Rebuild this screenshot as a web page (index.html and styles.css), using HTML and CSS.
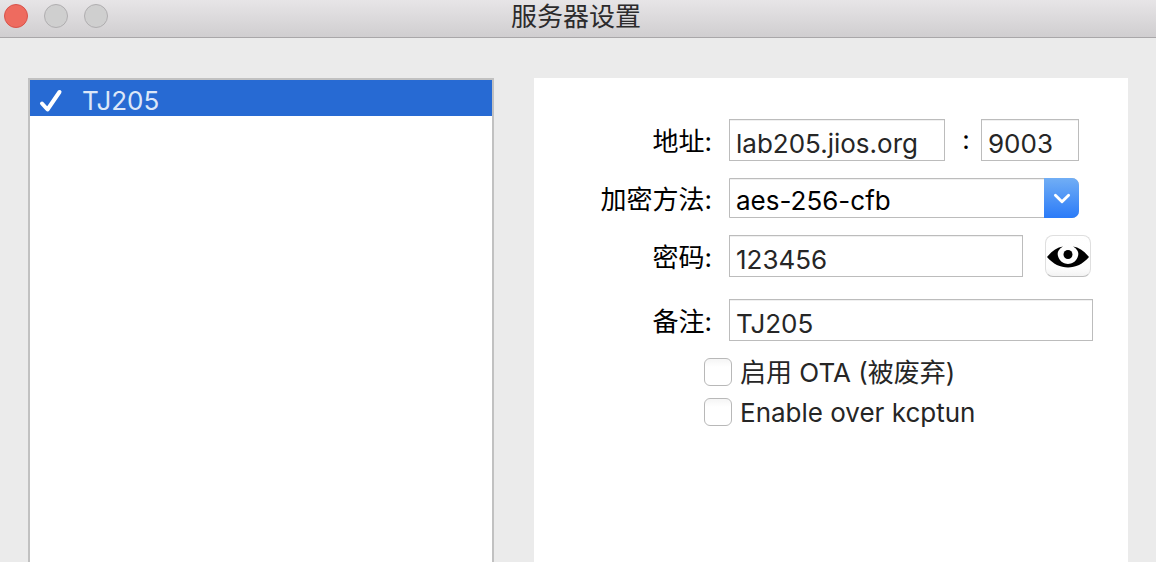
FILE: index.html
```html
<!DOCTYPE html>
<html lang="zh-CN">
<head>
<meta charset="utf-8">
<meta name="viewport" content="width=device-width, initial-scale=1">
<title>服务器设置</title>
<link rel="stylesheet" href="styles.css">
</head>
<body>
<div class="window">
  <header class="titlebar">
    <div class="controls">
      <button class="dot dot-close" type="button" aria-label="关闭"></button>
      <button class="dot" type="button" aria-label="最小化"></button>
      <button class="dot" type="button" aria-label="缩放"></button>
    </div>
    <h1 class="title">服务器设置</h1>
  </header>
  <main class="content">
    <ul class="server-list">
      <li class="server">
        <svg class="check" viewBox="0 0 24 24" aria-hidden="true"><path d="M3.500 14.500 9 20.500 21 3" fill="none" stroke="#fff" stroke-width="4" stroke-linecap="round" stroke-linejoin="round"/></svg>
        <span>TJ205</span>
      </li>
    </ul>
    <form class="panel">
      <div class="row row-address">
        <label class="label" for="host">地址:</label>
        <div class="field field-short">
          <input class="text" id="host" type="text" value="lab205.jios.org">
          <span class="colon">:</span>
          <input class="text port" type="text" value="9003" aria-label="端口">
        </div>
      </div>
      <div class="row row-method">
        <label class="label" for="method">加密方法:</label>
        <div class="field field-short combo">
          <select class="select" id="method"><option>aes-256-cfb</option></select>
          <span class="arrow"><svg class="chevron" viewBox="0 0 16 10" aria-hidden="true"><path d="M2 2 8 8 14 2" fill="none" stroke="#fff" stroke-width="2.600" stroke-linecap="round" stroke-linejoin="round"/></svg></span>
        </div>
      </div>
      <div class="row row-password">
        <label class="label" for="password">密码:</label>
        <div class="field field-password">
          <input class="text" id="password" type="text" value="123456">
          <button class="eye" type="button" aria-label="显示密码">
            <svg class="eye-icon" viewBox="0 0 42 22" aria-hidden="true"><path d="M0 11C5 5 10 1.500 16 .5 10 4 10 8 11.500 11.500 15 20 27 20 30.500 11.500 32 8 32 4 26 .5 32 1.500 37 5 42 11 30 25 12 25 0 11Z"/><circle cx="21" cy="8.500" r="4.500"/></svg>
          </button>
        </div>
      </div>
      <div class="row row-remark">
        <label class="label" for="remark">备注:</label>
        <div class="field"><input class="text" id="remark" type="text" value="TJ205"></div>
      </div>
      <div class="options">
        <label class="option"><input class="box" type="checkbox"><span>启用 OTA (被废弃)</span></label>
        <label class="option"><input class="box" type="checkbox"><span>Enable over kcptun</span></label>
      </div>
    </form>
  </main>
</div>
</body>
</html>
```
FILE: styles.css
```css
* {
  box-sizing: border-box;
}

body {
  margin: 0;
  background: #ebebeb;
  color: #000;
  font: 26px/36px Inter, "Noto Sans CJK SC", sans-serif;
}

input,
select,
button {
  margin: 0;
  font: inherit;
}

.window {
  display: flex;
  flex-direction: column;
  min-height: 100vh;
}

.titlebar {
  display: grid;
  grid-template-columns: 1fr auto 1fr;
  height: 38px;
  padding: 0 8px 0 4px;
  border-bottom: 1px solid #a9a7a9;
  background: linear-gradient(#e7e5e7, #d0ced0);
}

.controls {
  display: flex;
  gap: 16px;
  padding-top: 4px;
}

.dot {
  width: 24px;
  height: 24px;
  padding: 0;
  border: 1px solid #b0aeb0;
  border-radius: 50%;
  background: #cfcfcf;
}

.dot-close {
  border-color: #d8524a;
  background: #ee6b5f;
}

.title {
  margin: 0;
  color: #2c2b2c;
  font-size: 26px;
  font-weight: 400;
  line-height: 34px;
}

.content {
  display: grid;
  flex: 1;
  grid-template-columns: 466fr 594fr;
  gap: 40px;
  padding: 40px 28px 0;
}

.server-list {
  margin: 0;
  padding: 0;
  border: 2px solid #c1c1c1;
  border-bottom: 0;
  background: #fff;
  list-style: none;
}

.server {
  display: flex;
  align-items: center;
  gap: 19px;
  height: 36px;
  padding: 6px 8px 0;
  background: #276ad3;
  color: #dce7f8;
}

.check {
  width: 25px;
  height: 24px;
}

.panel {
  padding: 41px 35px 20px 20px;
  background: #fff;
}

.row {
  display: grid;
  grid-template-columns: 158px 1fr;
  align-items: center;
  column-gap: 17px;
}

.row-method {
  margin-top: 17px;
}

.row-password {
  margin-top: 17px;
}

.row-remark {
  margin-top: 22px;
}

.label {
  padding-top: 3px;
  text-align: right;
}

.field {
  display: flex;
  align-items: center;
  min-width: 0;
}

.field-short {
  margin-right: 14px;
}

.field-password {
  gap: 22px;
  margin-right: 2px;
}

.text {
  flex: 1;
  min-width: 0;
  height: 42px;
  padding: 6px 6px 0;
  border: 1px solid #bcbcbc;
  border-radius: 0;
  background: #fff;
  box-shadow: inset 0 1px #f0f0f0;
  color: #262626;
}

.port {
  flex: 0 0 98px;
}

.colon {
  width: 36px;
  padding-left: 6px;
  text-align: center;
}

.combo {
  position: relative;
}

.select {
  width: 100%;
  height: 40px;
  padding: 4px 40px 0 6px;
  border: 1px solid #bcbcbc;
  border-radius: 0 7px 7px 0;
  appearance: none;
  background: #fff;
  box-shadow: inset 0 1px #f0f0f0;
  color: #000;
}

.arrow {
  position: absolute;
  top: 0;
  right: 0;
  display: grid;
  width: 35px;
  height: 40px;
  place-items: center;
  border-radius: 0 7px 7px 0;
  background: linear-gradient(#71aef5, #2b7bf8);
  pointer-events: none;
}

.chevron {
  width: 18px;
  height: 11px;
}

.eye {
  display: grid;
  width: 46px;
  height: 42px;
  padding: 2px 0 0;
  place-items: center;
  border: 1px solid #dfdfdf;
  border-bottom-color: #bdbdbd;
  border-radius: 8px;
  background: linear-gradient(#fff, #fdfdfd 80%, #f3f3f3);
}

.eye-icon {
  width: 42px;
  height: 22px;
}

.options {
  display: grid;
  gap: 4px;
  padding: 13px 0 0 150px;
}

.option {
  display: flex;
  align-items: center;
  gap: 8px;
  color: #262626;
}

.option span {
  padding-top: 2px;
  line-height: 34px;
}

.box {
  width: 28px;
  height: 28px;
  border: 1px solid #b8b8b8;
  border-radius: 6px;
  appearance: none;
  background: linear-gradient(#f5f5f5, #fff 30%);
}

.box:checked {
  background: #2b7bf8;
}
```
